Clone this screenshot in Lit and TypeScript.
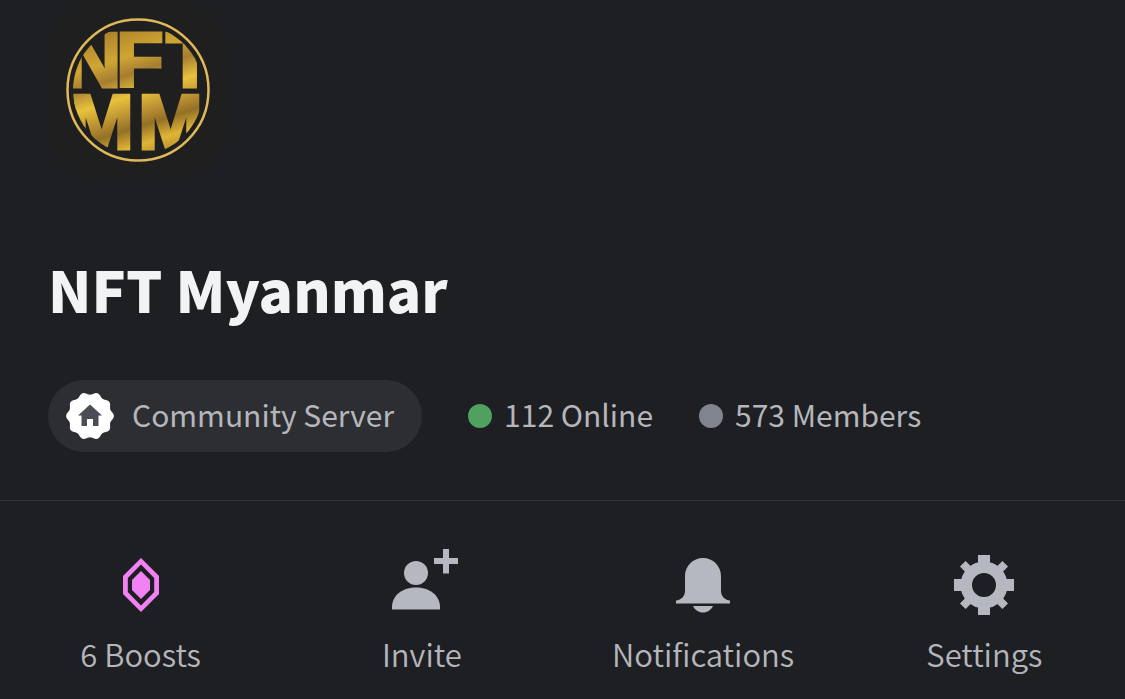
import { LitElement, html, svg, css } from "lit";
import { customElement } from "lit/decorators.js";

/* Outline of the scalloped community badge: a circle with ten soft bumps. */
const badgeOutline = (() => {
  const points: string[] = [];
  for (let i = 0; i < 120; i++) {
    const a = (i / 120) * Math.PI * 2;
    const r = 22.6 + 1.3 * Math.cos(10 * a);
    points.push(`${(24 + r * Math.cos(a)).toFixed(2)},${(24 + r * Math.sin(a)).toFixed(2)}`);
  }
  return points.join(" ");
})();

const boostIcon = svg`
  <path fill-rule="evenodd" d="M36 9 54 27V45L36 63 18 45V27ZM36 15.500 22.800 29V43L36 56.500 49.200 43V29Z"/>
  <path d="M36 22 45 31V41L36 50 27 41V31Z"/>`;

const inviteIcon = svg`
  <circle cx="30" cy="24" r="12"/>
  <path d="M6 60.500V58C6 46 17 38.500 30 38.500S54 46 54 58V60.500Z"/>
  <path d="M57 0h6v9h9v6h-9v9.500h-6V15h-9V9h9Z"/>`;

const bellIcon = svg`
  <path d="M36 9C46 9 54 17 54 27V42C54 47 57.500 51 63 51.500V54.500H9V51.500C14.500 51 18 47 18 42V27C18 17 26 9 36 9Z"/>
  <path d="M26 57H46C44 61 40.500 63.500 36 63.500S28 61 26 57Z"/>`;

const gearIcon = svg`
  <path fill-rule="evenodd" d="M36 12.500a23.500 23.500 0 1 0 0 47a23.500 23.500 0 1 0 0-47ZM36 24a12 12 0 1 1 0 24a12 12 0 1 1 0-24Z"/>
  ${[0, 90, 180, 270].map((a) => svg`<rect x="30" y="6" width="12" height="10" transform="rotate(${a} 36 36)"/>`)}
  ${[45, 135, 225, 315].map((a) => svg`<rect x="32" y="6" width="8" height="10" transform="rotate(${a} 36 36)"/>`)}`;

@customElement("server-logo")
export class ServerLogo extends LitElement {
  static styles = css`
    :host { display: block; }
    .logo { display: block; width: 180px; height: 180px; border-radius: 54px; background: #1f1f1f; }
    .letters { font-family: "Liberation Sans", sans-serif; font-weight: 700; font-size: 78px; }
  `;
  render() {
    return html`
      <svg class="logo" viewBox="0 0 180 180" role="img" aria-label="NFT MM">
        <defs>
          <linearGradient id="gold" gradientUnits="userSpaceOnUse" x1="68" y1="20" x2="112" y2="160">
            <stop offset="0" stop-color="#947126"/>
            <stop offset=".12" stop-color="#b98e2c"/>
            <stop offset=".26" stop-color="#cfa634"/>
            <stop offset=".38" stop-color="#a67d30"/>
            <stop offset=".52" stop-color="#e8c23c"/>
            <stop offset=".66" stop-color="#b58c32"/>
            <stop offset=".74" stop-color="#947026"/>
            <stop offset=".86" stop-color="#dfb535"/>
            <stop offset="1" stop-color="#a98030"/>
          </linearGradient>
          <clipPath id="disc"><circle cx="90" cy="90" r="65"/></clipPath>
        </defs>
        <circle cx="90" cy="90" r="70.500" fill="none" stroke="#dfb95a" stroke-width="2.500"/>
        <g clip-path="url(#disc)">
          <text class="letters" fill="url(#gold)" stroke="url(#gold)" stroke-width="3">
            <tspan x="17 68 118" y="87">NFT</tspan>
            <tspan x="21 90" y="149">MM</tspan>
          </text>
        </g>
      </svg>`;
  }
}

@customElement("app-root")
export class AppRoot extends LitElement {
  static styles = css`
    :host {
      display: block;
      min-height: 100vh;
      background: #1e1f23;
      color: #b5b6bc;
      font-family: "Noto Sans CJK JP", "Noto Sans", sans-serif;
      font-size: 30px;
      line-height: 40px;
    }
    .header { padding: 0 48px 48px; }
    .title { margin: 68px 0 52px; font-size: 57px; line-height: 80px; font-weight: 900; color: #f2f3f5; }
    .meta { display: flex; align-items: center; flex-wrap: wrap; gap: 46px; }
    .pill { display: flex; align-items: center; gap: 18px; height: 72px; padding: 0 28px 0 18px; border-radius: 36px; background: #2d2e32; }
    .badge { width: 48px; height: 48px; }
    .stat { display: flex; align-items: center; gap: 12px; }
    .text { padding-bottom: 4px; }
    .dot { width: 24px; height: 24px; border-radius: 50%; background: #80848e; }
    .online { background: #4fa15f; }
    .actions { display: grid; grid-template-columns: repeat(4, 1fr); border-top: 1px solid #303136; padding-top: 48px; }
    .action { display: flex; flex-direction: column; align-items: center; gap: 13px; padding: 0; border: 0; background: none; color: inherit; font: inherit; font-size: 31px; font-weight: 350; cursor: pointer; }
    .icon { width: 72px; height: 72px; fill: #b5b8c1; }
    .boost { fill: #f281f4; }
  `;

  private actions = [
    { label: "6 Boosts", icon: boostIcon, cls: "icon boost" },
    { label: "Invite", icon: inviteIcon, cls: "icon" },
    { label: "Notifications", icon: bellIcon, cls: "icon" },
    { label: "Settings", icon: gearIcon, cls: "icon" },
  ];

  render() {
    return html`
      <header class="header">
        <server-logo></server-logo>
        <h1 class="title">NFT Myanmar</h1>
        <div class="meta">
          <div class="pill">
            <svg class="badge" viewBox="0 0 48 48" aria-hidden="true">
              <polygon points=${badgeOutline} fill="#fff"/>
              <path d="M24 12.500 36 23.500H32.500V34H27V27H21V34H15.500V23.500H12Z" fill="#4b4c55"/>
            </svg>
            <span class="text">Community Server</span>
          </div>
          <div class="stat"><span class="dot online"></span><span class="text">112 Online</span></div>
          <div class="stat"><span class="dot"></span><span class="text">573 Members</span></div>
        </div>
      </header>
      <nav class="actions" aria-label="Server actions">
        ${this.actions.map(
          (a) => html`<button class="action" type="button">
            <svg class=${a.cls} viewBox="0 0 72 72" aria-hidden="true">${a.icon}</svg>
            <span>${a.label}</span>
          </button>`
        )}
      </nav>`;
  }
}
